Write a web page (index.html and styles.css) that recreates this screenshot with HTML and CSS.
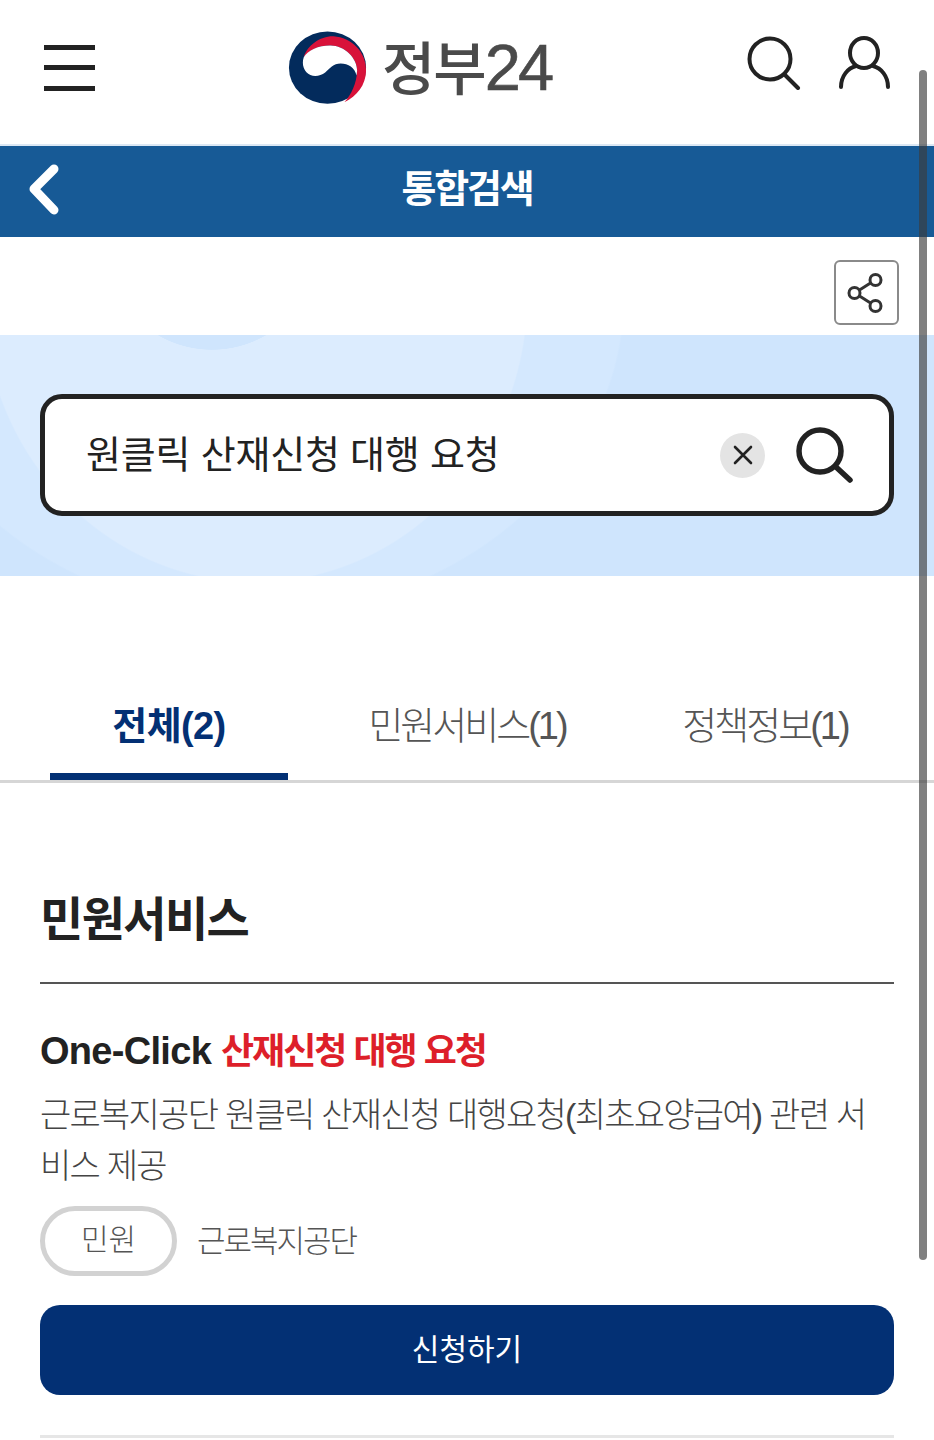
FILE: index.html
```html
<!DOCTYPE html>
<html lang="ko">

<head>
    <meta charset="utf-8">
    <title>통합검색 | 정부24</title>
    <link rel="stylesheet" href="styles.css">
</head>

<body>
    <header class="top-bar">
        <button class="menu-btn" aria-label="메뉴">
            <span></span><span></span><span></span>
        </button>
        <div class="logo">
            <svg class="logo-mark" width="87" height="80" viewBox="0 0 264 252" preserveAspectRatio="none">
                <ellipse cx="132" cy="125" rx="117" ry="114" fill="#032b5c"/>
                <path d="M60 92C70 55 110 25 150 26 205 30 250 75 249 135 248 180 222 215 183 234 205 210 220 175 222 135 222 95 185 55 140 55 105 55 75 70 60 92z" fill="#d8123a"/>
                <path d="M60 92C72 70 105 55 140 55 185 55 222 95 222 135L220 150C215 125 195 112 172 112 150 112 138 128 125 140 112 150 95 155 80 148 62 140 52 115 60 92z" fill="#fff"/>
            </svg>
            <span class="logo-text">정부<span class="logo-num">24</span></span>
        </div>
        <div class="top-icons">
            <svg width="56" height="56" viewBox="0 0 56 56" fill="none" stroke="#222" stroke-width="4" stroke-linecap="round">
                <circle cx="24" cy="25" r="20.5"/>
                <path d="M39 41l13 13"/>
            </svg>
            <svg width="54" height="56" viewBox="0 0 54 56" fill="none" stroke="#222" stroke-width="4" stroke-linecap="round">
                <ellipse cx="26" cy="19" rx="14" ry="15"/>
                <path d="M3 53c0-11 7-19 15-21M50 53c0-11-7-19-15-21"/>
            </svg>
        </div>
    </header>

    <div class="title-bar">
        <svg class="back-icon" width="34" height="52" viewBox="0 0 34 52" fill="none" stroke="#fff" stroke-width="9" stroke-linecap="round" stroke-linejoin="round">
            <path d="M27 6L7 26l20 21"/>
        </svg>
        <h1>통합검색</h1>
    </div>

    <div class="share-row">
        <button class="share-btn" aria-label="공유">
            <svg width="40" height="42" viewBox="0 0 40 42" fill="none" stroke="#333" stroke-width="3">
                <circle cx="28.5" cy="8" r="5.5"/>
                <circle cx="7.5" cy="21" r="5.5"/>
                <circle cx="28.5" cy="34" r="5.5"/>
                <path d="M12.5 18l11-7M12.5 24l11 7"/>
            </svg>
        </button>
    </div>

    <section class="search-band">
        <div class="search-box">
            <span class="search-text">원클릭 산재신청 대행 요청</span>
            <span class="clear-btn">
                <svg width="20" height="20" viewBox="0 0 20 20" stroke="#222" stroke-width="2.6" stroke-linecap="round">
                    <path d="M2 2l16 16M18 2L2 18"/>
                </svg>
            </span>
            <svg width="60" height="58" viewBox="0 0 60 58" fill="none" stroke="#222" stroke-width="5.5" stroke-linecap="round">
                <circle cx="25" cy="25" r="21"/>
                <path d="M41 41l14 13"/>
            </svg>
        </div>
    </section>

    <nav class="tabs">
        <a class="tab active">전체(2)</a>
        <a class="tab">민원서비스(1)</a>
        <a class="tab">정책정보(1)</a>
    </nav>

    <main class="results">
        <h2>민원서비스</h2>
        <article class="result">
            <h3>One-Click <em>산재신청 대행 요청</em></h3>
            <p>근로복지공단 원클릭 산재신청 대행요청(최초요양급여) 관련 서비스 제공</p>
            <div class="meta">
                <span class="badge">민원</span>
                <span class="org">근로복지공단</span>
            </div>
            <button class="apply-btn">신청하기</button>
        </article>
    </main>

    <div class="scrollbar"></div>
</body>

</html>
```

FILE: styles.css
```css
* {
    box-sizing: border-box;
}

html,
body {
    height: 1440px;
    overflow: hidden;
}

body {
    margin: 0;
    background: #fff;
    font-family: "Liberation Sans", "Noto Sans CJK KR", sans-serif;
    color: #222;
}

button {
    font-family: inherit;
    padding: 0;
    border: none;
    background: none;
}

.top-bar {
    height: 144px;
    padding: 0 42px 0 44px;
    display: flex;
    align-items: center;
    justify-content: space-between;
    position: relative;
}

.menu-btn {
    width: 51px;
    height: 46px;
    margin-top: -9px;
    display: flex;
    flex-direction: column;
    justify-content: space-between;
}

.menu-btn span {
    display: block;
    height: 5px;
    background: #222;
}

.logo {
    position: absolute;
    left: 284px;
    top: 28px;
    display: flex;
    align-items: center;
    gap: 11px;
}

.logo-text {
    font-family: "Noto Sans CJK KR", sans-serif;
    font-size: 58px;
    line-height: 76px;
    letter-spacing: -2px;
    color: #4a4a4a;
    font-weight: 500;
    margin-top: -3px;
}

.logo-num {
    font-family: "Liberation Sans", sans-serif;
    font-size: 65px;
    letter-spacing: -3px;
    font-weight: 400;
    -webkit-text-stroke: 0.6px #4a4a4a;
}

.top-icons {
    display: flex;
    gap: 36px;
    margin-top: -20px;
}

.title-bar {
    height: 93px;
    background: #175a96;
    border-top: 2px solid #dce8f4;
    position: relative;
    display: flex;
    align-items: center;
    justify-content: center;
}

.title-bar h1 {
    margin: 0 0 12px;
    font-size: 38px;
    font-weight: 700;
    letter-spacing: -2.2px;
    color: #fff;
}

.back-icon {
    position: absolute;
    left: 27px;
    top: 17px;
}

.share-row {
    height: 98px;
    padding: 23px 35px 0 0;
    display: flex;
    justify-content: flex-end;
}

.share-btn {
    width: 65px;
    height: 65px;
    border: 2px solid #8a8a8a;
    border-radius: 6px;
    background: #fff;
    display: flex;
    align-items: center;
    justify-content: center;
}

.search-band {
    height: 241px;
    padding: 59px 40px 0;
    background:
        radial-gradient(circle 108px at 212px -93px, #cfe5fd 99.5%, transparent 100%),
        radial-gradient(273px 288px at 255px -40px, #dcecfe 99.5%, transparent 100%),
        radial-gradient(370px 320px at 255px -40px, #d4e8fe 99.5%, transparent 100%),
        #cfe5fd;
}

.search-box {
    height: 122px;
    border: 5px solid #222;
    border-radius: 22px;
    background: #fff;
    padding: 0 34px 0 41px;
    display: flex;
    align-items: center;
}

.search-text {
    flex: 1;
    font-size: 38px;
    letter-spacing: -0.2px;
    margin-top: -8px;
}

.clear-btn {
    width: 45px;
    height: 45px;
    margin-right: 30px;
    border-radius: 50%;
    background: #e4e4e4;
    display: flex;
    align-items: center;
    justify-content: center;
}

.tabs {
    margin-top: 117px;
    height: 90px;
    padding: 0 0 0 50px;
    border-bottom: 3px solid #d6d6d6;
    display: flex;
}

.tab {
    width: 238px;
    height: 87px;
    font-size: 38px;
    font-weight: 300;
    letter-spacing: -3px;
    line-height: 66px;
    text-align: center;
    color: #555;
    margin-right: 60px;
}

.tab:last-child {
    margin-right: 0;
}

.tab.active {
    color: #033074;
    font-weight: 700;
    letter-spacing: -0.6px;
    border-bottom: 7px solid #033074;
}

.results {
    padding: 0 40px;
}

.results h2 {
    margin: 102px 0 0;
    height: 99px;
    font-size: 47px;
    line-height: 70px;
    letter-spacing: -1.6px;
    font-weight: 700;
    border-bottom: 2px solid #555;
}

.result {
    height: 454px;
    padding-top: 39px;
    border-bottom: 3px solid #e6e6e6;
}

.result h3 {
    margin: 0;
    font-size: 38px;
    line-height: 56px;
    letter-spacing: -0.7px;
    font-weight: 700;
}

.result h3 em {
    font-size: 36px;
    letter-spacing: -2px;
    font-style: normal;
    color: #dd1f2a;
}

.result p {
    margin: 10px 0 0;
    font-size: 34px;
    font-weight: 300;
    line-height: 51px;
    letter-spacing: -1.75px;
    color: #444;
}

.meta {
    margin-top: 14px;
    display: flex;
    align-items: center;
    gap: 20px;
}

.badge {
    width: 137px;
    height: 70px;
    border: 5px solid #d2d2d2;
    border-radius: 35px;
    font-size: 30px;
    font-weight: 300;
    line-height: 58px;
    text-align: center;
    color: #555;
}

.org {
    font-size: 31px;
    font-weight: 300;
    letter-spacing: -2px;
    color: #555;
    margin-top: -6px;
}

.apply-btn {
    display: block;
    width: 100%;
    height: 90px;
    margin-top: 29px;
    padding-bottom: 6px;
    border-radius: 20px;
    background: #033074;
    color: #fff;
    font-size: 30px;
}

.scrollbar {
    position: absolute;
    left: 919px;
    top: 70px;
    width: 8px;
    height: 1190px;
    border-radius: 4px;
    background: rgba(60, 60, 60, 0.65);
}
```
